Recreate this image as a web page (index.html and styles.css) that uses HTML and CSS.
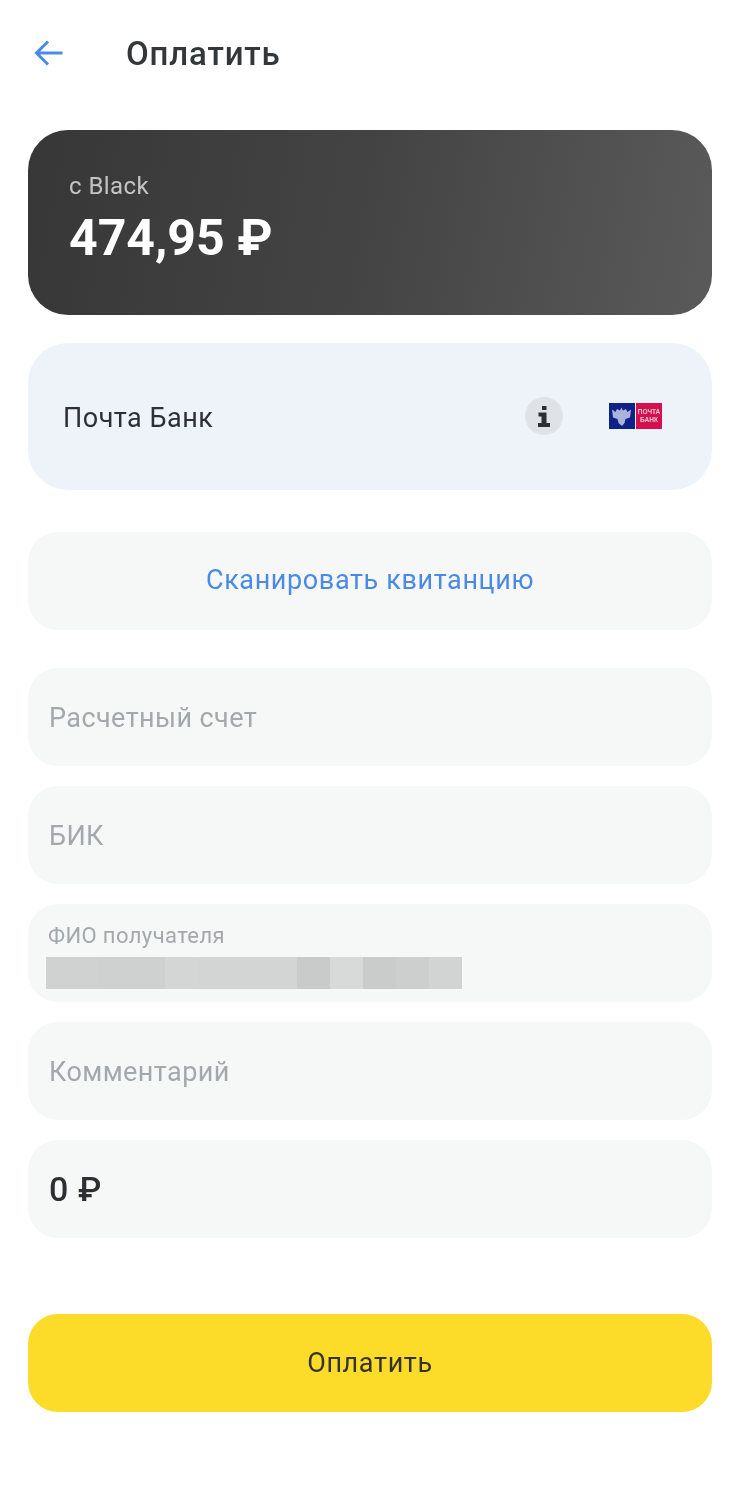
FILE: index.html
```html
<!DOCTYPE html>
<html lang="ru">
<head>
<meta charset="utf-8">
<title>Оплатить</title>
<link rel="stylesheet" href="styles.css">
</head>
<body>
<div class="page">
  <header class="header">
    <svg class="back" width="30" height="28" viewBox="0 0 30 28" fill="none"><path d="M28.5 14H3M14 2.5L2.5 14 14 25.5" stroke="#4a8ae6" stroke-width="3"/></svg>
    <h1 class="title">Оплатить</h1>
  </header>
  <section class="balance">
    <div class="balance-label">с Black</div>
    <div class="balance-value">474,95 ₽</div>
  </section>
  <section class="bank">
    <span class="bank-name">Почта Банк</span>
    <span class="info">
      <svg width="14" height="21" viewBox="0 0 14 21"><path d="M5 0h4.500v4H5zM1.500 6.500h8V17H13v4H1v-4h3.500v-6.500H1.500z" fill="#2d3033"/></svg>
    </span>
    <svg class="logo" width="53" height="26" viewBox="0 0 53 26">
      <rect width="26" height="26" fill="#0f2288"/>
      <rect x="27" width="26" height="26" fill="#d4104e"/>
      <path d="M13 23l-3.500-3-1-4-4.500-1.500-1-8 3.500 2.500 1.500-3 3 1.500 1.500-3 1.500 3 3-1.500 1.500 3L22 6.500l-1 8-4.500 1.500-1 4z" fill="#a9b3de"/>
      <text class="logo-text" x="40" y="11" text-anchor="middle">ПОЧТА</text>
      <text class="logo-text" x="40" y="19" text-anchor="middle">БАНК</text>
    </svg>
  </section>
  <button class="scan">Сканировать квитанцию</button>
  <div class="fields">
    <div class="field"><span class="placeholder">Расчетный счет</span></div>
    <div class="field"><span class="placeholder">БИК</span></div>
    <div class="field field-filled">
      <span class="field-label">ФИО получателя</span>
      <div class="mosaic">
        <i class="m1"></i><i class="m2"></i><i class="m3"></i><i class="m4"></i><i class="m5"></i><i class="m6"></i><i class="m7"></i><i class="m8"></i><i class="m9"></i>
      </div>
    </div>
    <div class="field"><span class="placeholder">Комментарий</span></div>
    <div class="field"><span class="amount">0 ₽</span></div>
  </div>
  <button class="pay">Оплатить</button>
</div>
</body>
</html>
```
FILE: styles.css
```css
* { box-sizing: border-box; }
html, body { margin: 0; padding: 0; background: #fff; }
body { font-family: Roboto, "Noto Sans", sans-serif; color: #2d3033; }
.page { width: 740px; height: 1494px; padding: 0 28px; display: flex; flex-direction: column; filter: blur(0.45px); }
.header { height: 130px; display: flex; align-items: flex-start; padding-top: 39px; }
.back { margin-left: 6px; flex: none; }
.title { margin: -3px 0 0 62px; font-size: 33px; line-height: 36px; font-weight: 500; letter-spacing: 0.85px; color: #33373a; }
.balance { height: 185px; border-radius: 40px; padding: 41px 41px 0; color: #fff; background: linear-gradient(100deg, #373737 0%, #444444 50%, #5a5a5a 100%); }
.balance-label { font-size: 24px; line-height: 30px; letter-spacing: 0.45px; color: #c4c4c4; }
.balance-value { font-size: 50px; line-height: 60px; font-weight: 700; margin-top: 7px; }
.bank { margin-top: 28px; height: 147px; border-radius: 40px; background: #eef3fa; display: flex; align-items: center; padding: 0 50px 0 35px; }
.bank-name { font-size: 27px; letter-spacing: 0.5px; flex: 1; color: #2c2f33; padding-top: 2px; }
.info { width: 38px; height: 38px; border-radius: 50%; background: #dfe2e6; display: flex; align-items: center; justify-content: center; margin: -1px 46px 0 0; }
.logo { flex: none; margin-top: -1px; }
.logo-text { font: 700 6.5px "Liberation Sans", sans-serif; fill: #f6c4d3; }
.scan { margin-top: 42px; height: 98px; border: 0; border-radius: 30px; background: #f6f8f8; font: 400 27px Roboto, sans-serif; letter-spacing: 0.62px; color: #4a8ae6; padding: 0 0 2px; }
.fields { margin-top: 38px; display: flex; flex-direction: column; gap: 20px; }
.field { height: 98px; border-radius: 30px; background: #f6f8f8; padding: 1px 21px 0; display: flex; flex-direction: column; justify-content: center; }
.placeholder { font-size: 27px; letter-spacing: 0.42px; color: #a3a8ad; }
.field-filled { justify-content: flex-start; padding: 19px 18px 0; }
.field-label { font-size: 22px; line-height: 25px; letter-spacing: 0.4px; color: #a3a8ad; margin-left: 2px; }
.mosaic { display: flex; height: 32px; margin-top: 9px; width: 416px; }
.mosaic i { display: block; height: 100%; }
.m1 { width: 52px; background: #d0d2d2; }
.m2 { width: 67px; background: #cfd1d0; }
.m3 { width: 33px; background: #d4d6d6; }
.m4 { width: 99px; background: #d3d5d5; }
.m5 { width: 33px; background: #c9cbcb; }
.m6 { width: 33px; background: #d8dada; }
.m7 { width: 33px; background: #cacccc; }
.m8 { width: 33px; background: #cdcfcf; }
.m9 { width: 33px; background: #d2d4d4; }
.amount { font-size: 34px; font-weight: 500; letter-spacing: 0.6px; color: #2d3033; margin-top: -2px; }
.pay { margin-top: 76px; height: 98px; border: 0; border-radius: 30px; background: #fddb29; font: 400 27px Roboto, sans-serif; letter-spacing: 0.65px; color: #33332a; padding: 0; }
```
